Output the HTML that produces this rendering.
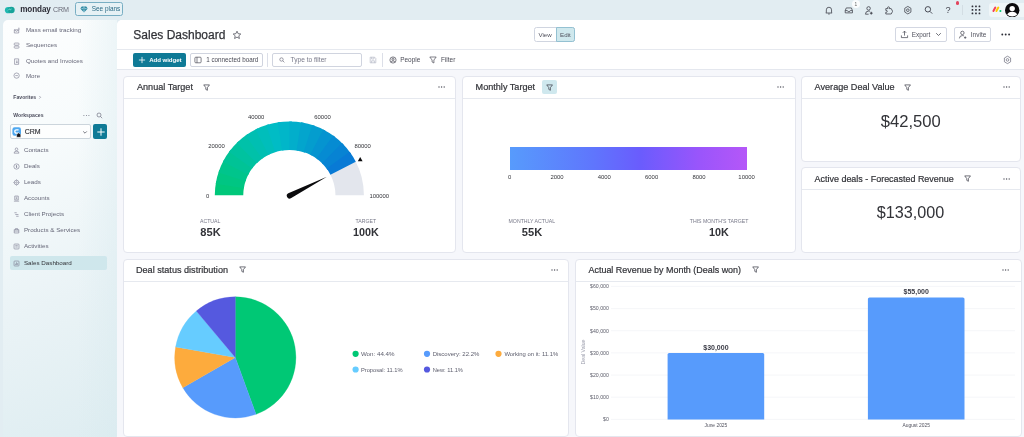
<!DOCTYPE html>
<html>
<head>
<meta charset="utf-8">
<title>Sales Dashboard</title>
<style>
*{box-sizing:border-box;margin:0;padding:0}
html,body{width:1024px;height:437px;overflow:hidden}
body{position:relative;background:#e2edf2;font-family:"Liberation Sans",sans-serif;color:#323338}
#root{position:absolute;left:0;top:0;width:1024px;height:437px;overflow:hidden;will-change:transform}
.a{position:absolute}
.t{position:absolute;white-space:nowrap;line-height:1}
#side{left:3px;top:20px;width:113.5px;height:420px;border-radius:5px 0 0 0;background:linear-gradient(90deg,rgba(214,233,238,0) 65%,rgba(214,233,238,0.38) 100%),linear-gradient(158deg,#fdfefe 0%,#f7fbfc 30%,#eaf3f6 65%,#deedf1 100%)}
#main{left:117px;top:20px;width:910px;height:420px;border-radius:5px 0 0 0;background:#f6f7fb}
#hdr{left:117px;top:20px;width:910px;height:50px;border-radius:5px 0 0 0;background:#fff;border-bottom:1px solid #e4e7ee}
#hdrline{left:117px;top:48.9px;width:910px;height:1px;background:#e6e9ef}
.card{position:absolute;background:#fff;border:1px solid #e4e6ee;border-radius:4px}
.card .hl{position:absolute;left:0;right:0;top:21px;height:1px;background:#e6e9ef}
.btn{position:absolute;border:1px solid #d0d4df;border-radius:2px;background:#fff}
</style>
</head>
<body>
<div id="root">
<!-- top bar -->
<svg class="a" style="left:4.2px;top:5.7px" width="11.6" height="8" viewBox="0 0 13 10" ><ellipse cx="4.6" cy="5.2" rx="4.2" ry="3.9" fill="#1fb7b0"/><ellipse cx="8.4" cy="5" rx="4.2" ry="4" fill="#17a39a"/><path d="M4.2 5.6 L6.3 3.4 L7 5 L8.8 3.6" stroke="#7fe3dc" stroke-width="0.9" fill="none"/></svg>
<span class="t" style="left:20.2px;top:6px;font-size:8.15px;font-weight:bold;color:#2b2c36;letter-spacing:-0.1px">monday</span>
<span class="t" style="left:53px;top:5.6px;font-size:7.2px;color:#6a6b78;letter-spacing:-0.2px">CRM</span>
<div class="a" style="left:75.2px;top:2.2px;width:48px;height:13.7px;border:1px solid #78aec3;border-radius:2.5px;background:#e6f1f5"></div>
<svg class="a" style="left:80px;top:5.5px" width="8" height="7" viewBox="0 0 8 7" ><path d="M1.8 0.4 H6.2 L7.7 2.4 L4 6.6 L0.3 2.4 Z" fill="#1c7f9a"/><path d="M0.3 2.4 H7.7 M2.8 2.4 L4 6.4 L5.2 2.4 L4 0.5 Z" stroke="#d9f0f5" stroke-width="0.45" fill="none"/></svg>
<span class="t" style="left:91.7px;top:6.2px;font-size:6.45px;color:#2b6a85">See plans</span>
<svg class="a" style="left:824.35px;top:4.6px" width="9.9" height="10.8" viewBox="0 0 11 12" fill="none" stroke="#3a3b45" stroke-width="0.85"><path d="M2.6 8.2 V5.4 A2.9 2.9 0 0 1 8.4 5.4 V8.2 L9 8.9 H2 Z" stroke-linejoin="round"/><path d="M4.6 10 H6.4"/></svg>
<svg class="a" style="left:843.76px;top:5.5px" width="9.68" height="8.8" viewBox="0 0 11 10" fill="none" stroke="#3a3b45" stroke-width="0.85"><path d="M1.4 5.2 L2.6 2.2 H8.4 L9.6 5.2 V7.8 H1.4 Z M1.4 5.2 H3.8 Q4 6.4 5.5 6.4 Q7 6.4 7.2 5.2 H9.6" stroke-linejoin="round"/></svg>
<div class="a" style="left:851.6px;top:0.4px;width:8px;height:8px;border-radius:50%;background:#fafcfd"></div>
<span class="t" style="left:854.5px;top:3px;font-size:4.8px;color:#666">1</span>
<svg class="a" style="left:863.94px;top:4.78px" width="10.12" height="11.04" viewBox="0 0 11 12" fill="none" stroke="#3a3b45" stroke-width="0.85"><circle cx="5" cy="3.7" r="1.9"/><path d="M1.6 10 Q1.6 6.6 5 6.6 Q6 6.6 6.6 6.9 M1.6 10 H5"/><path d="M7.9 7.4 V10.4 M6.4 8.9 H9.4" stroke-width="1"/></svg>
<svg class="a" style="left:883.55px;top:4.6px" width="9.9" height="10.8" viewBox="0 0 11 12" fill="none" stroke="#3a3b45" stroke-width="0.85"><path d="M2 4 H4.2 Q3.4 2 5 2 Q6.6 2 5.8 4 H8 L9.6 7 L8 10 H2 V8 Q3.6 8.4 3.6 7 Q3.6 5.6 2 6 Z" stroke-linejoin="round"/></svg>
<svg class="a" style="left:903.26px;top:4.72px" width="9.68" height="10.56" viewBox="0 0 11 12" fill="none" stroke="#3a3b45" stroke-width="0.85"><path d="M5.5 1.6 L9 3.7 V8.1 L5.5 10.2 L2 8.1 V3.7 Z" stroke-linejoin="round"/><circle cx="5.5" cy="5.9" r="1.5"/></svg>
<svg class="a" style="left:922.5px;top:4px" width="11" height="12" viewBox="0 0 11 12" fill="none" stroke="#3a3b45" stroke-width="0.9"><circle cx="4.9" cy="5.3" r="2.7"/><path d="M7 7.4 L9.2 9.6"/></svg>
<span class="t" style="left:945.4px;top:6.2px;font-size:9.2px;color:#44454f">?</span>
<div class="a" style="left:955.5px;top:1.4px;width:3.6px;height:3.6px;border-radius:50%;background:#e2445c"></div>
<div class="a" style="left:962px;top:5px;width:1px;height:10px;background:#d3dde3"></div>
<svg class="a" style="left:970.5px;top:4.5px" width="10" height="10" viewBox="0 0 10 10" fill="#2f303a"><rect x="0.6" y="0.6" width="1.7" height="1.7" rx="0.5"/><rect x="4.1" y="0.6" width="1.7" height="1.7" rx="0.5"/><rect x="7.6" y="0.6" width="1.7" height="1.7" rx="0.5"/><rect x="0.6" y="4.1" width="1.7" height="1.7" rx="0.5"/><rect x="4.1" y="4.1" width="1.7" height="1.7" rx="0.5"/><rect x="7.6" y="4.1" width="1.7" height="1.7" rx="0.5"/><rect x="0.6" y="7.6" width="1.7" height="1.7" rx="0.5"/><rect x="4.1" y="7.6" width="1.7" height="1.7" rx="0.5"/><rect x="7.6" y="7.6" width="1.7" height="1.7" rx="0.5"/></svg>
<div class="a" style="left:989px;top:2.6px;width:40px;height:14px;border-radius:3px;background:#f0f6f8"></div>
<svg class="a" style="left:992px;top:6.3px" width="10" height="7" viewBox="0 0 10 7" ><path d="M1.4 5 L3.3 1.6" stroke="#f6425b" stroke-width="2" stroke-linecap="round"/><path d="M4.4 5 L6.3 1.6" stroke="#ffcb00" stroke-width="2" stroke-linecap="round"/><circle cx="8.4" cy="5" r="1.05" fill="#00ca72"/></svg>
<svg class="a" style="left:1005.3px;top:2.9px" width="14.4" height="14.4" viewBox="0 0 14.4 14.4" ><circle cx="7.2" cy="7.2" r="7.2" fill="#0b0b0d"/><circle cx="7.2" cy="5.6" r="2.7" fill="#fff"/><path d="M2.2 11.6 Q3.2 8.7 7.2 8.7 Q11.2 8.7 12.2 11.6 Q10.2 13.6 7.2 13.6 Q4.2 13.6 2.2 11.6 Z" fill="#fff"/></svg>
<div class="a" id="side"></div>
<div class="a" id="main"></div>
<div class="a" id="hdr"></div>
<div class="a" id="hdrline"></div>
<!-- sidebar -->
<svg class="a" style="left:13.08px;top:26.68px" width="7.04" height="7.04" viewBox="0 0 8 8" fill="none" stroke="#7a7b90" stroke-width="0.7" stroke-linejoin="round"><path d="M1.5 3.2 H6.5 V6.8 H1.5 Z M1.5 3.2 L4 5 L6.5 3.2 M5.6 2 L7 0.8 M6.6 2.6 L8 2"/></svg>
<span class="t" style="left:25.9px;top:26.9px;font-size:6.25px;color:#676879">Mass email tracking</span>
<svg class="a" style="left:13.08px;top:41.78px" width="7.04" height="7.04" viewBox="0 0 8 8" fill="none" stroke="#7a7b90" stroke-width="0.7" stroke-linejoin="round"><rect x="1.4" y="1.2" width="5.4" height="2.4" rx="0.8"/><rect x="1.4" y="4.6" width="5.4" height="2.4" rx="0.8"/></svg>
<span class="t" style="left:25.9px;top:42.0px;font-size:6.25px;color:#676879">Sequences</span>
<svg class="a" style="left:13.08px;top:57.68px" width="7.04" height="7.04" viewBox="0 0 8 8" fill="none" stroke="#7a7b90" stroke-width="0.7" stroke-linejoin="round"><path d="M1.8 1 H6.4 V7.2 H1.8 Z M4.4 2.6 V5.8 M3.4 4.8 H5.4"/></svg>
<span class="t" style="left:25.9px;top:58.4px;font-size:6.25px;color:#676879">Quotes and Invoices</span>
<svg class="a" style="left:13.08px;top:72.28px" width="7.04" height="7.04" viewBox="0 0 8 8" fill="none" stroke="#7a7b90" stroke-width="0.7" stroke-linejoin="round"><circle cx="4.1" cy="4.1" r="3"/><path d="M2.6 4.1 H5.6" /></svg>
<span class="t" style="left:25.9px;top:72.5px;font-size:6.25px;color:#676879">More</span>
<span class="t" style="left:13.3px;top:94.6px;font-size:5.15px;font-weight:bold;color:#4d4e5e">Favorites</span>
<svg class="a" style="left:38.3px;top:94.5px" width="4" height="4.6" viewBox="0 0 4 4.6" fill="none" stroke="#7a7b8c" stroke-width="0.6"><path d="M1.3 1 L2.6 2.3 L1.3 3.6"/></svg>
<span class="t" style="left:13.3px;top:112.9px;font-size:5.15px;font-weight:bold;color:#4d4e5e">Workspaces</span>
<span class="t" style="left:82.8px;top:111.6px;font-size:7px;color:#676879;letter-spacing:0.1px">&middot;&middot;&middot;</span>
<svg class="a" style="left:95.6px;top:111.6px" width="7" height="7" viewBox="0 0 7 7" fill="none" stroke="#676879" stroke-width="0.65"><circle cx="3" cy="3" r="2"/><path d="M4.5 4.5 L6.2 6.2"/></svg>
<div class="a" style="left:9.7px;top:124.2px;width:81px;height:14.7px;border:1px solid #ccd5dc;border-radius:2px;background:#fdfefe"></div>
<svg class="a" style="left:12.4px;top:127px" width="10" height="10.5" viewBox="0 0 10 10.5" ><rect x="0.4" y="0.2" width="8.6" height="8.6" rx="2.2" fill="#4fa8f0"/><path d="M6.6 2.8 H4.4 Q2.8 2.8 2.8 4.5 Q2.8 6.2 4.4 6.2 H6.6" stroke="#fff" stroke-width="1.3" fill="none"/><path d="M4.6 10.3 V7.6 L6.7 5.8 L8.8 7.6 V10.3 Z" fill="#16161c" stroke="#fff" stroke-width="0.5"/></svg>
<span class="t" style="left:24.7px;top:128.3px;font-size:7px;color:#323338;-webkit-text-stroke:0.15px #323338">CRM</span>
<svg class="a" style="left:82px;top:129.6px" width="6" height="5" viewBox="0 0 6 5" fill="none" stroke="#50515c" stroke-width="0.75"><path d="M1.2 1.4 L3 3.2 L4.8 1.4"/></svg>
<div class="a" style="left:93.3px;top:124.2px;width:13.8px;height:14.8px;border-radius:2px;background:#0f7a96"></div>
<svg class="a" style="left:96.5px;top:127.5px" width="8" height="8" viewBox="0 0 8 8" stroke="#fff" stroke-width="1"><path d="M4 0.3 V7.7 M0.3 4 H7.7"/></svg>
<div class="a" style="left:10px;top:255.6px;width:97px;height:14px;border-radius:2px;background:#cfe7ec"></div>
<svg class="a" style="left:13.08px;top:147.18px" width="7.04" height="7.04" viewBox="0 0 8 8" fill="none" stroke="#7a7b90" stroke-width="0.7" stroke-linejoin="round"><circle cx="4" cy="2.6" r="1.5"/><path d="M1.2 7 Q1.2 4.8 4 4.8 Q6.8 4.8 6.8 7 Z"/></svg>
<span class="t" style="left:23.9px;top:147px;font-size:6.25px;color:#676879">Contacts</span>
<svg class="a" style="left:13.08px;top:163.18px" width="7.04" height="7.04" viewBox="0 0 8 8" fill="none" stroke="#7a7b90" stroke-width="0.7" stroke-linejoin="round"><circle cx="4" cy="4" r="3"/><path d="M4 2.4 V5.6 M3.2 3.4 H4.6 M3.4 4.6 H4.8"/></svg>
<span class="t" style="left:23.9px;top:163px;font-size:6.25px;color:#676879">Deals</span>
<svg class="a" style="left:13.08px;top:179.18px" width="7.04" height="7.04" viewBox="0 0 8 8" fill="none" stroke="#7a7b90" stroke-width="0.7" stroke-linejoin="round"><circle cx="4" cy="4" r="2.6"/><circle cx="4" cy="4" r="0.9"/><path d="M4 0.6 V1.6 M4 6.4 V7.4 M0.6 4 H1.6 M6.4 4 H7.4"/></svg>
<span class="t" style="left:23.9px;top:179px;font-size:6.25px;color:#676879">Leads</span>
<svg class="a" style="left:13.08px;top:195.18px" width="7.04" height="7.04" viewBox="0 0 8 8" fill="none" stroke="#7a7b90" stroke-width="0.7" stroke-linejoin="round"><path d="M2 1.2 H6 V5.6 H2 Z M1 7 H7 M3.2 2.6 H4.8 M3.2 4 H4.8"/></svg>
<span class="t" style="left:23.9px;top:195px;font-size:6.25px;color:#676879">Accounts</span>
<svg class="a" style="left:13.08px;top:211.18px" width="7.04" height="7.04" viewBox="0 0 8 8" fill="none" stroke="#7a7b90" stroke-width="0.7" stroke-linejoin="round"><path d="M1.6 2 H4.2 M2.6 4 H6.2 M3.6 6 H6.4"/></svg>
<span class="t" style="left:23.9px;top:211px;font-size:6.25px;color:#676879">Client Projects</span>
<svg class="a" style="left:13.08px;top:227.18px" width="7.04" height="7.04" viewBox="0 0 8 8" fill="none" stroke="#7a7b90" stroke-width="0.7" stroke-linejoin="round"><path d="M1.4 3 H6.6 V6.8 H1.4 Z M2.8 3 V1.8 H5.2 V3 M1.4 4.6 H6.6"/></svg>
<span class="t" style="left:23.9px;top:227px;font-size:6.25px;color:#676879">Products &amp; Services</span>
<svg class="a" style="left:13.08px;top:243.18px" width="7.04" height="7.04" viewBox="0 0 8 8" fill="none" stroke="#7a7b90" stroke-width="0.7" stroke-linejoin="round"><rect x="1.2" y="1.2" width="5.6" height="5.6" rx="0.8"/><path d="M2.6 3 H5.4 M2.6 4.6 H5.4"/></svg>
<span class="t" style="left:23.9px;top:243px;font-size:6.25px;color:#676879">Activities</span>
<svg class="a" style="left:13.08px;top:260.18px" width="7.04" height="7.04" viewBox="0 0 8 8" fill="none" stroke="#7a7b90" stroke-width="0.7" stroke-linejoin="round"><rect x="1.2" y="1.2" width="5.6" height="5.6" rx="0.8"/><path d="M2.8 5.6 V4.2 M4 5.6 V2.6 M5.2 5.6 V3.6"/></svg>
<span class="t" style="left:23.9px;top:260px;font-size:6.25px;color:#323338">Sales Dashboard</span>
<!-- header -->
<span class="t" style="left:133.3px;top:28.6px;font-size:12px;color:#323338;-webkit-text-stroke:0.25px #323338">Sales Dashboard</span>
<svg class="a" style="left:231.6px;top:29.6px" width="10" height="10" viewBox="0 0 10 10" fill="none" stroke="#4a4b56" stroke-width="0.75" stroke-linejoin="round"><path d="M5 1.2 L6.15 3.7 L8.8 4 L6.8 5.8 L7.4 8.5 L5 7.1 L2.6 8.5 L3.2 5.8 L1.2 4 L3.85 3.7 Z"/></svg>
<div class="a" style="left:534.2px;top:27.2px;width:41px;height:14.7px;border:1px solid #d0d5e0;border-radius:2.5px;background:#fff"></div>
<div class="a" style="left:555.9px;top:27.2px;width:19.4px;height:14.7px;border:1px solid #94c1d2;border-radius:0 2.5px 2.5px 0;background:#cfe8ed"></div>
<span class="t" style="left:538.4px;top:31.6px;font-size:6.2px;color:#50515d">View</span>
<span class="t" style="left:560.1px;top:31.6px;font-size:6.2px;color:#50515d">Edit</span>
<div class="btn" style="left:894.7px;top:27.3px;width:52px;height:14.4px;border-color:#d3d7e2"></div>
<svg class="a" style="left:899.6px;top:29.8px" width="9" height="9" viewBox="0 0 9 9" fill="none" stroke="#4a4b56" stroke-width="0.75"><path d="M4.5 5.6 V1.2 M2.8 2.8 L4.5 1.1 L6.2 2.8 M1.4 5.4 V7.6 H7.6 V5.4"/></svg>
<span class="t" style="left:911.8px;top:31.5px;font-size:6.4px;color:#50515d">Export</span>
<svg class="a" style="left:935.2px;top:32.4px" width="7" height="5" viewBox="0 0 7 5" fill="none" stroke="#4a4b56" stroke-width="0.8"><path d="M1.2 1.2 L3.5 3.5 L5.8 1.2"/></svg>
<div class="btn" style="left:954.2px;top:27.3px;width:36.4px;height:14.4px;border-color:#d3d7e2"></div>
<svg class="a" style="left:958px;top:29.6px" width="10" height="10" viewBox="0 0 10 10" fill="none" stroke="#4a4b56" stroke-width="0.75"><circle cx="4.4" cy="2.9" r="1.7"/><path d="M1.4 8.4 Q1.4 5.6 4.4 5.6 Q5.4 5.6 6 5.9"/><path d="M7.2 6.4 V8.8 M6 7.6 H8.4"/></svg>
<span class="t" style="left:970.8px;top:31.5px;font-size:6.5px;color:#50515d">Invite</span>
<svg class="a" style="left:1000.6px;top:33px" width="10" height="3" viewBox="0 0 10 3" fill="#2c2d36"><circle cx="1.3" cy="1.5" r="0.95"/><circle cx="4.7" cy="1.5" r="0.95"/><circle cx="8.1" cy="1.5" r="0.95"/></svg>
<div class="a" style="left:133.4px;top:52.9px;width:52.4px;height:14.1px;border-radius:2px;background:#0f7a96"></div>
<svg class="a" style="left:138px;top:56.2px" width="8" height="8" viewBox="0 0 8 8" stroke="#fff" stroke-width="0.8"><path d="M4 0.9 V7.1 M0.9 4 H7.1"/></svg>
<span class="t" style="left:149.2px;top:56.8px;font-size:6.1px;font-weight:bold;color:#fff;letter-spacing:-0.05px">Add widget</span>
<div class="btn" style="left:189.5px;top:52.7px;width:73px;height:13.9px"></div>
<svg class="a" style="left:194.4px;top:55.8px" width="8" height="8" viewBox="0 0 8 8" fill="none" stroke="#4a4b56" stroke-width="0.7"><rect x="0.9" y="1.2" width="6.2" height="5.6" rx="0.9"/><path d="M3 1.2 V6.8"/></svg>
<span class="t" style="left:206.2px;top:56.9px;font-size:6.3px;color:#4a4b56">1 connected board</span>
<div class="a" style="left:267.3px;top:53px;width:1px;height:13.6px;background:#dcdfe8"></div>
<div class="btn" style="left:271.9px;top:52.7px;width:90.5px;height:13.9px"></div>
<svg class="a" style="left:279px;top:56.8px" width="6" height="6" viewBox="0 0 6 6" fill="none" stroke="#676879" stroke-width="0.65"><circle cx="2.5" cy="2.5" r="1.7"/><path d="M3.8 3.8 L5.4 5.4"/></svg>
<span class="t" style="left:290.6px;top:56.6px;font-size:6.6px;color:#787989">Type to filter</span>
<svg class="a" style="left:368.8px;top:55.9px" width="8" height="8" viewBox="0 0 8 8" fill="none" stroke="#b5b8c6" stroke-width="0.7"><path d="M1.2 1.2 H5.6 L6.8 2.4 V6.8 H1.2 Z M2.6 1.2 V3 H5 V1.2 M2.6 6.8 V4.8 H5.4 V6.8"/></svg>
<div class="a" style="left:382.2px;top:53px;width:1px;height:13.6px;background:#dcdfe8"></div>
<svg class="a" style="left:389.2px;top:55.7px" width="8" height="8" viewBox="0 0 8 8" fill="none" stroke="#4a4b56" stroke-width="0.7"><circle cx="4" cy="4" r="3.1"/><circle cx="4" cy="3.2" r="1.1"/><path d="M2 6.2 Q2.4 4.9 4 4.9 Q5.6 4.9 6 6.2"/></svg>
<span class="t" style="left:400.2px;top:56.9px;font-size:6.45px;color:#4a4b56">People</span>
<svg class="a" style="left:429.3px;top:55.8px" width="8" height="8" viewBox="0 0 8 8" fill="none" stroke="#4a4b56" stroke-width="0.7" stroke-linejoin="round"><path d="M0.8 1 H7.2 L4.9 4 V7 L3.1 6 V4 Z"/></svg>
<span class="t" style="left:441px;top:56.9px;font-size:6.45px;color:#4a4b56">Filter</span>
<svg class="a" style="left:1002.6px;top:55px" width="9" height="10" viewBox="0 0 9 10" fill="none" stroke="#676879" stroke-width="0.7" stroke-linejoin="round"><path d="M4.5 1.2 L7.6 3 V6.8 L4.5 8.6 L1.4 6.8 V3 Z"/><circle cx="4.5" cy="4.9" r="1.3"/></svg>
<!-- cards -->
<div class="card" style="left:122.7px;top:76px;width:333.8px;height:177.2px"><div class="hl"></div></div>
<div class="card" style="left:461.5px;top:76px;width:334px;height:177.2px"><div class="hl"></div></div>
<div class="card" style="left:800.7px;top:76px;width:220.8px;height:86px"><div class="hl"></div></div>
<div class="card" style="left:800.7px;top:167px;width:220.8px;height:86.2px"><div class="hl"></div></div>
<div class="card" style="left:122.7px;top:258.5px;width:446.8px;height:178px"><div class="hl"></div></div>
<div class="card" style="left:575px;top:258.5px;width:446.5px;height:178px"><div class="hl"></div></div>
<span class="t" style="left:137px;top:83.2px;font-size:9.1px;color:#323338;-webkit-text-stroke:0.2px #323338">Annual Target</span>
<svg class="a" style="left:203.3px;top:83.6px" width="7.2" height="7.2" viewBox="0 0 8 8" fill="none" stroke="#3c3d48" stroke-width="0.8" stroke-linejoin="round"><path d="M0.8 1 H7.2 L4.9 4 V7 L3.1 6 V4 Z"/></svg>
<svg class="a" style="left:437.79999999999995px;top:86px" width="7.2" height="2" viewBox="0 0 7.2 2" fill="#50515c"><circle cx="1" cy="1" r="0.7"/><circle cx="3.6" cy="1" r="0.7"/><circle cx="6.2" cy="1" r="0.7"/></svg>
<span class="t" style="left:475.6px;top:83.2px;font-size:9.1px;color:#323338;-webkit-text-stroke:0.2px #323338">Monthly Target</span>
<div class="a" style="left:542.4000000000001px;top:79.8px;width:14.6px;height:14.1px;border-radius:2px;background:#cfe8ee"></div>
<svg class="a" style="left:546.1px;top:83.6px" width="7.2" height="7.2" viewBox="0 0 8 8" fill="none" stroke="#3c3d48" stroke-width="0.8" stroke-linejoin="round"><path d="M0.8 1 H7.2 L4.9 4 V7 L3.1 6 V4 Z"/></svg>
<svg class="a" style="left:776.9px;top:86px" width="7.2" height="2" viewBox="0 0 7.2 2" fill="#50515c"><circle cx="1" cy="1" r="0.7"/><circle cx="3.6" cy="1" r="0.7"/><circle cx="6.2" cy="1" r="0.7"/></svg>
<span class="t" style="left:814.6px;top:83.2px;font-size:9.1px;color:#323338;-webkit-text-stroke:0.2px #323338">Average Deal Value</span>
<svg class="a" style="left:903.9px;top:83.6px" width="7.2" height="7.2" viewBox="0 0 8 8" fill="none" stroke="#3c3d48" stroke-width="0.8" stroke-linejoin="round"><path d="M0.8 1 H7.2 L4.9 4 V7 L3.1 6 V4 Z"/></svg>
<svg class="a" style="left:1002.9px;top:86px" width="7.2" height="2" viewBox="0 0 7.2 2" fill="#50515c"><circle cx="1" cy="1" r="0.7"/><circle cx="3.6" cy="1" r="0.7"/><circle cx="6.2" cy="1" r="0.7"/></svg>
<span class="t" style="left:814.6px;top:174.8px;font-size:8.95px;color:#323338;-webkit-text-stroke:0.2px #323338">Active deals - Forecasted Revenue</span>
<svg class="a" style="left:963.9px;top:175.1px" width="7.2" height="7.2" viewBox="0 0 8 8" fill="none" stroke="#3c3d48" stroke-width="0.8" stroke-linejoin="round"><path d="M0.8 1 H7.2 L4.9 4 V7 L3.1 6 V4 Z"/></svg>
<svg class="a" style="left:1002.9px;top:177.5px" width="7.2" height="2" viewBox="0 0 7.2 2" fill="#50515c"><circle cx="1" cy="1" r="0.7"/><circle cx="3.6" cy="1" r="0.7"/><circle cx="6.2" cy="1" r="0.7"/></svg>
<span class="t" style="left:136px;top:265.8px;font-size:9.1px;color:#323338;-webkit-text-stroke:0.2px #323338">Deal status distribution</span>
<svg class="a" style="left:239.4px;top:266.1px" width="7.2" height="7.2" viewBox="0 0 8 8" fill="none" stroke="#3c3d48" stroke-width="0.8" stroke-linejoin="round"><path d="M0.8 1 H7.2 L4.9 4 V7 L3.1 6 V4 Z"/></svg>
<svg class="a" style="left:551.4px;top:268.5px" width="7.2" height="2" viewBox="0 0 7.2 2" fill="#50515c"><circle cx="1" cy="1" r="0.7"/><circle cx="3.6" cy="1" r="0.7"/><circle cx="6.2" cy="1" r="0.7"/></svg>
<span class="t" style="left:588.5px;top:265.8px;font-size:8.95px;color:#323338;-webkit-text-stroke:0.2px #323338">Actual Revenue by Month (Deals won)</span>
<svg class="a" style="left:751.9px;top:266.1px" width="7.2" height="7.2" viewBox="0 0 8 8" fill="none" stroke="#3c3d48" stroke-width="0.8" stroke-linejoin="round"><path d="M0.8 1 H7.2 L4.9 4 V7 L3.1 6 V4 Z"/></svg>
<svg class="a" style="left:1002.4px;top:268.5px" width="7.2" height="2" viewBox="0 0 7.2 2" fill="#50515c"><circle cx="1" cy="1" r="0.7"/><circle cx="3.6" cy="1" r="0.7"/><circle cx="6.2" cy="1" r="0.7"/></svg>
<!-- charts -->
<svg class="a" style="left:0px;top:0px" width="1024" height="437" viewBox="0 0 1024 437" ><path d="M355.17 160.61 A74.55 73.9 0 0 1 363.90 195.30 L335.45 195.30 A46.1 45.4 0 0 0 330.05 173.99 Z" fill="#e3e6ed"/>
<path d="M214.80 195.30 A74.55 73.9 0 0 1 216.17 181.20 L244.10 186.64 A46.1 45.4 0 0 0 243.25 195.30 Z" fill="rgb(0,199,122)"/>
<path d="M215.72 183.74 A74.55 73.9 0 0 1 219.30 170.02 L246.03 179.77 A46.1 45.4 0 0 0 243.82 188.20 Z" fill="rgb(0,198,131)"/>
<path d="M218.45 172.46 A74.55 73.9 0 0 1 224.15 159.47 L249.03 173.29 A46.1 45.4 0 0 0 245.51 181.27 Z" fill="rgb(0,197,140)"/>
<path d="M222.93 161.75 A74.55 73.9 0 0 1 230.60 149.80 L253.02 167.35 A46.1 45.4 0 0 0 248.27 174.69 Z" fill="rgb(0,195,150)"/>
<path d="M229.04 151.86 A74.55 73.9 0 0 1 238.51 141.25 L257.91 162.10 A46.1 45.4 0 0 0 252.05 168.61 Z" fill="rgb(0,194,159)"/>
<path d="M236.64 143.04 A74.55 73.9 0 0 1 247.66 134.03 L263.57 157.66 A46.1 45.4 0 0 0 256.75 163.20 Z" fill="rgb(0,193,169)"/>
<path d="M245.53 135.51 A74.55 73.9 0 0 1 257.84 128.32 L269.87 154.15 A46.1 45.4 0 0 0 262.25 158.57 Z" fill="rgb(0,191,178)"/>
<path d="M255.51 129.45 A74.55 73.9 0 0 1 268.80 124.26 L276.64 151.66 A46.1 45.4 0 0 0 268.42 154.85 Z" fill="rgb(0,190,187)"/>
<path d="M266.31 125.02 A74.55 73.9 0 0 1 280.26 121.95 L283.73 150.24 A46.1 45.4 0 0 0 275.10 152.12 Z" fill="rgb(0,188,197)"/>
<path d="M277.69 122.31 A74.55 73.9 0 0 1 291.95 121.45 L290.96 149.93 A46.1 45.4 0 0 0 282.14 150.46 Z" fill="rgb(1,182,201)"/>
<path d="M289.35 121.40 A74.55 73.9 0 0 1 303.57 122.76 L298.15 150.73 A46.1 45.4 0 0 0 289.35 149.90 Z" fill="rgb(2,174,203)"/>
<path d="M301.01 122.31 A74.55 73.9 0 0 1 314.85 125.86 L305.12 152.64 A46.1 45.4 0 0 0 296.56 150.46 Z" fill="rgb(3,165,205)"/>
<path d="M312.39 125.02 A74.55 73.9 0 0 1 325.49 130.67 L311.70 155.59 A46.1 45.4 0 0 0 303.60 152.12 Z" fill="rgb(4,157,206)"/>
<path d="M323.19 129.45 A74.55 73.9 0 0 1 335.25 137.07 L317.73 159.52 A46.1 45.4 0 0 0 310.28 154.85 Z" fill="rgb(5,148,208)"/>
<path d="M333.17 135.51 A74.55 73.9 0 0 1 343.87 144.90 L323.07 164.34 A46.1 45.4 0 0 0 316.45 158.57 Z" fill="rgb(6,139,210)"/>
<path d="M342.06 143.04 A74.55 73.9 0 0 1 351.15 153.98 L327.57 169.91 A46.1 45.4 0 0 0 321.95 163.20 Z" fill="rgb(7,131,211)"/>
<path d="M349.66 151.86 A74.55 73.9 0 0 1 355.77 161.75 L330.43 174.69 A46.1 45.4 0 0 0 326.65 168.61 Z" fill="rgb(8,122,213)"/>
<path d="M326.90 176.80 L290.87 198.20 A2.8 2.8 0 0 1 288.33 193.20 Z" fill="#0b0b0d"/>
<path d="M357.8 161.3 L362.59999999999997 161.3 L360.2 157.1 Z" fill="#0b0b0d"/>
<path d="M235.3 357.4 L235.30 296.80 A60.6 60.6 0 0 1 256.03 414.35 Z" fill="#00c875" stroke="#00c875" stroke-width="0.3"/>
<path d="M235.3 357.4 L256.03 414.35 A60.6 60.6 0 0 1 182.82 387.70 Z" fill="#579bfc" stroke="#579bfc" stroke-width="0.3"/>
<path d="M235.3 357.4 L182.82 387.70 A60.6 60.6 0 0 1 175.62 346.88 Z" fill="#fdab3d" stroke="#fdab3d" stroke-width="0.3"/>
<path d="M235.3 357.4 L175.62 346.88 A60.6 60.6 0 0 1 196.35 310.98 Z" fill="#66ccff" stroke="#66ccff" stroke-width="0.3"/>
<path d="M235.3 357.4 L196.35 310.98 A60.6 60.6 0 0 1 235.30 296.80 Z" fill="#5559df" stroke="#5559df" stroke-width="0.3"/>
<circle cx="355.6" cy="353.8" r="3.1" fill="#00c875"/>
<circle cx="427" cy="353.8" r="3.1" fill="#579bfc"/>
<circle cx="498.5" cy="353.8" r="3.1" fill="#fdab3d"/>
<circle cx="355.6" cy="369.5" r="3.1" fill="#66ccff"/>
<circle cx="427" cy="369.5" r="3.1" fill="#5559df"/>
<path d="M611 419.40 H1015" stroke="#f1f2f6" stroke-width="0.7"/>
<path d="M611 397.23 H1015" stroke="#f1f2f6" stroke-width="0.7"/>
<path d="M611 375.06 H1015" stroke="#f1f2f6" stroke-width="0.7"/>
<path d="M611 352.89 H1015" stroke="#f1f2f6" stroke-width="0.7"/>
<path d="M611 330.72 H1015" stroke="#f1f2f6" stroke-width="0.7"/>
<path d="M611 308.55 H1015" stroke="#f1f2f6" stroke-width="0.7"/>
<path d="M611 286.38 H1015" stroke="#f1f2f6" stroke-width="0.7"/>
<path d="M667.6 419.4 V354.49 Q667.6 352.89 669.2 352.89 H762.6 Q764.2 352.89 764.2 354.49 V419.4 Z" fill="#579bfc"/>
<path d="M867.9 419.4 V299.06 Q867.9 297.46 869.5 297.46 H962.9 Q964.5 297.46 964.5 299.06 V419.4 Z" fill="#579bfc"/></svg>
<!-- labels -->
<span class="t" style="left:207.7px;top:194px;font-size:5.9px;color:#323338;transform:translateX(-50%)">0</span>
<span class="t" style="left:216.5px;top:144px;font-size:5.9px;color:#323338;transform:translateX(-50%)">20000</span>
<span class="t" style="left:256.2px;top:115px;font-size:5.9px;color:#323338;transform:translateX(-50%)">40000</span>
<span class="t" style="left:322.5px;top:115px;font-size:5.9px;color:#323338;transform:translateX(-50%)">60000</span>
<span class="t" style="left:362.6px;top:144px;font-size:5.9px;color:#323338;transform:translateX(-50%)">80000</span>
<span class="t" style="left:379.3px;top:194px;font-size:5.9px;color:#323338;transform:translateX(-50%)">100000</span>
<span class="t" style="left:210.2px;top:219px;font-size:5.2px;color:#787989;transform:translateX(-50%)">ACTUAL</span>
<span class="t" style="left:210.5px;top:227px;font-size:11.1px;color:#323338;font-weight:bold;transform:translateX(-50%)">85K</span>
<span class="t" style="left:365.8px;top:219px;font-size:5.2px;color:#787989;transform:translateX(-50%)">TARGET</span>
<span class="t" style="left:365.8px;top:227px;font-size:10.8px;color:#323338;font-weight:bold;transform:translateX(-50%)">100K</span>
<div class="a" style="left:509.7px;top:147px;width:237.3px;height:22.9px;background:linear-gradient(90deg,#579bfc 0%,#5f76fd 35%,#6a5cfd 55%,#9a55fb 80%,#b557f8 100%)"></div>
<span class="t" style="left:509.7px;top:175px;font-size:5.95px;color:#323338;transform:translateX(-50%)">0</span>
<span class="t" style="left:557px;top:175px;font-size:5.95px;color:#323338;transform:translateX(-50%)">2000</span>
<span class="t" style="left:604.3px;top:175px;font-size:5.95px;color:#323338;transform:translateX(-50%)">4000</span>
<span class="t" style="left:651.6px;top:175px;font-size:5.95px;color:#323338;transform:translateX(-50%)">6000</span>
<span class="t" style="left:699px;top:175px;font-size:5.95px;color:#323338;transform:translateX(-50%)">8000</span>
<span class="t" style="left:746.6px;top:175px;font-size:5.95px;color:#323338;transform:translateX(-50%)">10000</span>
<span class="t" style="left:531.8px;top:219px;font-size:5.2px;color:#787989;transform:translateX(-50%)">MONTHLY ACTUAL</span>
<span class="t" style="left:532px;top:227px;font-size:11.1px;color:#323338;font-weight:bold;transform:translateX(-50%)">55K</span>
<span class="t" style="left:719.1px;top:219px;font-size:5.2px;color:#787989;transform:translateX(-50%)">THIS MONTH'S TARGET</span>
<span class="t" style="left:719px;top:227px;font-size:10.8px;color:#323338;font-weight:bold;transform:translateX(-50%)">10K</span>
<span class="t" style="left:910.8px;top:114px;font-size:16.6px;color:#323338;transform:translateX(-50%)">$42,500</span>
<span class="t" style="left:910.5px;top:204px;font-size:16.2px;color:#323338;transform:translateX(-50%)">$133,000</span>
<span class="t" style="left:360.9px;top:351px;font-size:6.2px;color:#5c5d6c">Won: 44.4%</span>
<span class="t" style="left:432.7px;top:351px;font-size:6.0px;color:#5c5d6c">Discovery: 22.2%</span>
<span class="t" style="left:504.4px;top:352px;font-size:5.9px;color:#5c5d6c">Working on it: 11.1%</span>
<span class="t" style="left:360.9px;top:368px;font-size:5.75px;color:#5c5d6c">Proposal: 11.1%</span>
<span class="t" style="left:432.7px;top:368px;font-size:5.7px;color:#5c5d6c">New: 11.1%</span>
<span class="t" style="left:608.8px;top:417px;font-size:5.2px;color:#5a5b68;transform:translateX(-100%)">$0</span>
<span class="t" style="left:608.8px;top:395px;font-size:5.2px;color:#5a5b68;transform:translateX(-100%)">$10,000</span>
<span class="t" style="left:608.8px;top:373px;font-size:5.2px;color:#5a5b68;transform:translateX(-100%)">$20,000</span>
<span class="t" style="left:608.8px;top:351px;font-size:5.2px;color:#5a5b68;transform:translateX(-100%)">$30,000</span>
<span class="t" style="left:608.8px;top:329px;font-size:5.2px;color:#5a5b68;transform:translateX(-100%)">$40,000</span>
<span class="t" style="left:608.8px;top:306px;font-size:5.2px;color:#5a5b68;transform:translateX(-100%)">$50,000</span>
<span class="t" style="left:608.8px;top:284px;font-size:5.2px;color:#5a5b68;transform:translateX(-100%)">$60,000</span>
<span class="t" style="left:584.3px;top:352.2px;font-size:5.2px;color:#9a9cab;transform:translate(-50%,-50%) rotate(-90deg)">Deal Value</span>
<span class="t" style="left:715.9px;top:344px;font-size:7.0px;color:#3a3b46;font-weight:bold;transform:translateX(-50%)">$30,000</span>
<span class="t" style="left:916.2px;top:288px;font-size:7.0px;color:#3a3b46;font-weight:bold;transform:translateX(-50%)">$55,000</span>
<span class="t" style="left:715.9px;top:424px;font-size:4.9px;color:#50515d;transform:translateX(-50%)">June 2025</span>
<span class="t" style="left:916.2px;top:424px;font-size:4.9px;color:#50515d;transform:translateX(-50%)">August 2025</span>
</div>
</body>
</html>
